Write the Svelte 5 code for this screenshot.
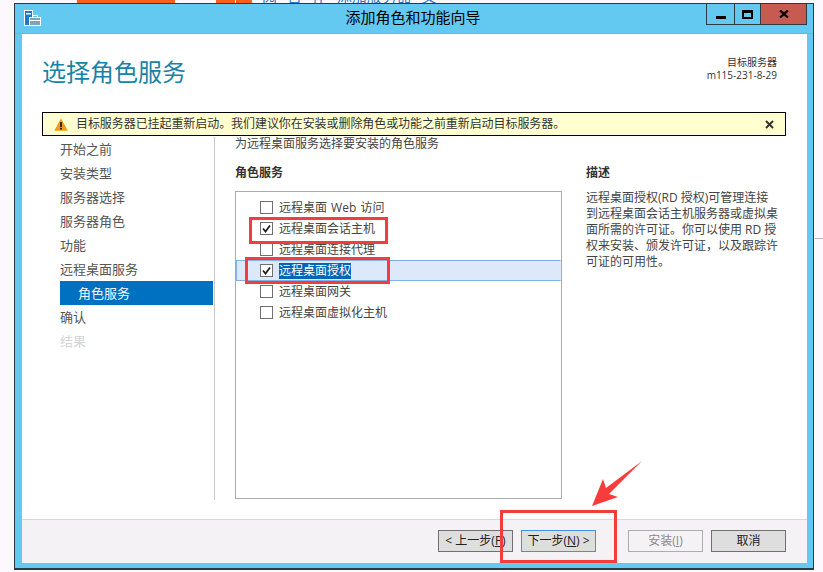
<script>
	const steps = [
		{ label: "开始之前" },
		{ label: "安装类型" },
		{ label: "服务器选择" },
		{ label: "服务器角色" },
		{ label: "功能" },
		{ label: "远程桌面服务" },
		{ label: "角色服务", active: true },
		{ label: "确认" },
		{ label: "结果", disabled: true }
	];

	let services = $state([
		{ label: "远程桌面 Web 访问", checked: false },
		{ label: "远程桌面会话主机", checked: true },
		{ label: "远程桌面连接代理", checked: false },
		{ label: "远程桌面授权", checked: true, selected: true },
		{ label: "远程桌面网关", checked: false },
		{ label: "远程桌面虚拟化主机", checked: false }
	]);

	const description = [
		"远程桌面授权(RD 授权)可管理连接",
		"到远程桌面会话主机服务器或虚拟桌",
		"面所需的许可证。你可以使用 RD 授",
		"权来安装、颁发许可证，以及跟踪许",
		"可证的可用性。"
	];
</script>

<div class="page">
	<!-- what is left of the window behind the wizard -->
	<div class="behind">
		<span class="orange first"></span>
		<span class="orange second"></span>
		<span class="orange third"></span>
		<span class="behind-text">阅 日 作 添加服务器 文</span>
	</div>

	<div class="window">
		<header class="titlebar">
			<svg class="app-icon" width="17" height="17" viewBox="0 0 17 17">
				<rect x="0.5" y="0.5" width="8" height="15" fill="#1f78c8" stroke="#fff" />
				<rect x="2" y="3" width="5" height="1.5" fill="#fff" />
				<rect x="5.5" y="7.5" width="11" height="8" fill="#7fa3b8" stroke="#fff" />
				<path d="M8.5 7.5V5.5H13.5V7.5M5.5 10.5H16.5" fill="none" stroke="#fff" />
			</svg>
			<span class="title">添加角色和功能向导</span>
			<div class="controls">
				<button class="ctl" type="button" aria-label="最小化"><span class="min"></span></button>
				<button class="ctl" type="button" aria-label="最大化"><span class="max"></span></button>
				<button class="ctl close" type="button" aria-label="关闭">
					<svg width="10" height="8" viewBox="0 0 10 8">
						<path d="M1 0.5L9 7.5M9 0.5L1 7.5" stroke="#000" stroke-width="2.2" fill="none" />
					</svg>
				</button>
			</div>
		</header>

		<div class="client">
			<div class="head">
				<h1>选择角色服务</h1>
				<div class="target">
					<div>目标服务器</div>
					<div class="host">m115-231-8-29</div>
				</div>
			</div>

			<div class="notice">
				<svg width="14" height="13" viewBox="0 0 14 13">
					<path d="M7 0.5L13.8 12.8H0.2Z" fill="#f59a14" />
					<rect x="6.1" y="4" width="1.8" height="5" fill="#222" />
					<rect x="6.1" y="9.8" width="1.8" height="1.8" fill="#222" />
				</svg>
				<span class="notice-text">目标服务器已挂起重新启动。我们建议你在安装或删除角色或功能之前重新启动目标服务器。</span>
				<svg class="notice-close" width="9" height="9" viewBox="0 0 9 9">
					<path d="M1 1L8 8M8 1L1 8" stroke="#333" stroke-width="2" fill="none" />
				</svg>
			</div>

			<div class="main">
				<nav class="steps">
					{#each steps as step}
						<div class="step" class:active={step.active} class:disabled={step.disabled}>{step.label}</div>
					{/each}
				</nav>

				<section class="content">
					<p class="intro">为远程桌面服务选择要安装的角色服务</p>
					<div class="columns">
						<div class="services">
							<h2>角色服务</h2>
							<div class="listbox">
								{#each services as service}
									<label class="row" class:selected={service.selected}>
										<input type="checkbox" bind:checked={service.checked} />
										<span class="box">
											{#if service.checked}
												<svg width="11" height="11" viewBox="0 0 11 11">
													<path d="M2 5.5L4.5 8.5L9 2.5" stroke="#222" stroke-width="1.8" fill="none" />
												</svg>
											{/if}
										</span>
										<span class="row-text">{service.label}</span>
									</label>
								{/each}
							</div>
						</div>
						<div class="desc">
							<h2>描述</h2>
							{#each description as line}
								<div class="desc-line">{line}</div>
							{/each}
						</div>
					</div>
				</section>
			</div>

			<footer class="footer">
				<button class="btn" type="button">&lt; 上一步(<u>P</u>)</button>
				<button class="btn next" type="button">下一步(<u>N</u>) &gt;</button>
				<button class="btn install" type="button" disabled>安装(<u>I</u>)</button>
				<button class="btn" type="button">取消</button>
			</footer>
		</div>
	</div>

	<!-- red annotations drawn on top of the screenshot -->
	<span class="mark mark-session"></span>
	<span class="mark mark-license"></span>
	<span class="mark mark-next"></span>
	<svg class="arrow" width="52" height="46" viewBox="0 0 52 46">
		<path d="M51 0L18 33L27 36L1 45L12 18L15 27Z" fill="#f83c3c" />
	</svg>
	<span class="edge-line"></span>
</div>

<style>
	:global(body) {
		background: #fdf8fd;
		font-family: "Open Sans", "Noto Sans CJK SC", sans-serif;
		font-size: 12px;
		color: #333;
	}

	.page {
		height: 572px;
		overflow: hidden;
		padding-left: 14px;
		position: relative;
		width: 823px;
		box-sizing: border-box;
	}

	.behind {
		display: flex;
		height: 3px;
		overflow: hidden;
		padding-left: 63px;
	}

	.orange {
		background: #fb5f1c;
		height: 3px;
	}

	.first {
		width: 98px;
	}

	.second {
		margin-left: 41px;
		width: 19px;
	}

	.third {
		margin-left: 1px;
		width: 16px;
	}

	.behind-text {
		color: #2b7cc4;
		font-size: 15px;
		line-height: 3px;
		margin-left: 10px;
		margin-top: -5px;
		white-space: pre;
		word-spacing: 6px;
	}

	.window {
		background: #63c9f0;
		border: 1px solid #2c3a42;
		border-bottom-width: 2px;
		box-sizing: border-box;
		display: flex;
		flex-direction: column;
		height: 567px;
		width: 800px;
	}

	.titlebar {
		align-items: flex-start;
		border-bottom: 1px solid #7db0c8;
		display: flex;
		height: 29px;
		padding-left: 9px;
		position: relative;
	}

	.app-icon {
		margin-top: 6px;
	}

	.title {
		color: #000;
		font-size: 15px;
		left: 0;
		line-height: 20px;
		padding-right: 2px;
		position: absolute;
		right: 0;
		text-align: center;
		top: 3px;
	}

	.controls {
		display: flex;
		margin-left: auto;
		margin-right: 6px;
		position: relative;
	}

	.ctl {
		align-items: center;
		background: none;
		border: 1px solid #2c3a42;
		border-top: 0;
		display: flex;
		height: 21px;
		justify-content: center;
		margin-left: -1px;
		padding: 0;
		width: 29px;
	}

	.ctl:nth-child(2) {
		width: 27px;
	}

	.close {
		background: #c75b52;
		width: 47px;
	}

	.min {
		background: #000;
		height: 3px;
		margin-top: 6px;
		width: 10px;
	}

	.max {
		border: 2px solid #000;
		border-top-width: 3px;
		box-sizing: border-box;
		height: 9px;
		width: 11px;
	}

	.client {
		background: #fff;
		display: flex;
		flex: 1;
		flex-direction: column;
		margin: 0 6px 5px 7px;
		min-height: 0;
	}

	.head {
		display: flex;
		height: 78px;
		justify-content: space-between;
		padding: 0 30px 0 20px;
	}

	h1 {
		color: #1a81a8;
		font-size: 24px;
		font-weight: 400;
		line-height: 34px;
		margin: 21px 0 0;
	}

	.target {
		color: #333;
		font-size: 10px;
		line-height: 13px;
		margin-top: 22px;
		text-align: right;
	}

	.notice {
		align-items: center;
		background: #ffffcf;
		border: 1px solid #000;
		box-sizing: border-box;
		color: #333;
		display: flex;
		height: 24px;
		margin: 0 20px;
		padding: 0 11px;
		width: 744px;
	}

	.notice-text {
		letter-spacing: -0.07px;
		line-height: 20px;
		margin-left: 8px;
	}

	.notice-close {
		margin-left: auto;
	}

	.main {
		display: flex;
		flex: 1;
		min-height: 0;
	}

	.steps {
		border-right: 1px solid #c8c8c8;
		box-sizing: border-box;
		font-size: 13px;
		height: 363px;
		margin-top: 1px;
		padding: 0 1px 0 38px;
		width: 193px;
	}

	.step {
		color: #555;
		height: 24px;
		line-height: 24px;
	}

	.step.active {
		background: #0070c0;
		color: #f2f8ff;
		padding-left: 18px;
	}

	.step.disabled {
		color: #d4d4d4;
	}

	.content {
		flex: 1;
		padding-left: 20px;
	}

	.intro {
		color: #444;
		line-height: 16px;
		margin: 0;
	}

	.columns {
		display: flex;
		margin-top: 13px;
	}

	h2 {
		color: #333;
		font-size: 12px;
		font-weight: 700;
		line-height: 16px;
		margin: 0 0 10px;
	}

	.services {
		width: 351px;
	}

	.listbox {
		border: 1px solid #aaa;
		box-sizing: border-box;
		height: 308px;
		padding-top: 5px;
		width: 327px;
	}

	.row {
		align-items: center;
		box-sizing: border-box;
		display: flex;
		height: 21px;
		padding-left: 24px;
	}

	.row.selected {
		background: #dce9fb;
		border: 1px solid #7fb0e8;
		border-right-color: #dce9fb;
		padding-left: 23px;
	}

	.row input {
		display: none;
	}

	.box {
		align-items: center;
		background: #fff;
		border: 1px solid #707070;
		box-sizing: border-box;
		display: flex;
		height: 13px;
		justify-content: center;
		width: 13px;
	}

	.row-text {
		color: #444;
		line-height: 16px;
		margin-left: 6px;
		word-spacing: 1px;
	}

	.selected .row-text {
		background: #0066b8;
		color: #fff;
	}

	.desc {
		color: #444;
		line-height: 16px;
		white-space: nowrap;
	}

	.desc h2 {
		margin-bottom: 9px;
	}

	.footer {
		align-items: flex-start;
		background: #f5f2f6;
		border-top: 1px solid #d8d8d8;
		box-sizing: border-box;
		display: flex;
		height: 44px;
		padding: 10px 0 0 416px;
	}

	.btn {
		background: #dedede;
		border: 1px solid #707070;
		color: #222;
		font-family: inherit;
		font-size: 12px;
		height: 22px;
		line-height: 18px;
		margin-right: 8px;
		padding: 0;
		white-space: nowrap;
		width: 75px;
	}

	.next {
		border-color: #3c93e8;
		margin-right: 32px;
	}

	.install {
		background: #f5f2f6;
		border-color: #adadad;
		color: #8a8a8a;
	}

	.mark {
		border: 3px solid #f33c3c;
		box-sizing: border-box;
		position: absolute;
	}

	.mark-session {
		height: 27px;
		left: 249px;
		top: 217px;
		width: 139px;
	}

	.mark-license {
		height: 27px;
		left: 245px;
		top: 257px;
		width: 145px;
	}

	.mark-next {
		height: 53px;
		left: 500px;
		top: 510px;
		width: 117px;
	}

	.arrow {
		left: 591px;
		position: absolute;
		top: 461px;
	}

	.edge-line {
		background: #b8b8b8;
		height: 1px;
		left: 815px;
		position: absolute;
		top: 238px;
		width: 8px;
	}
</style>
